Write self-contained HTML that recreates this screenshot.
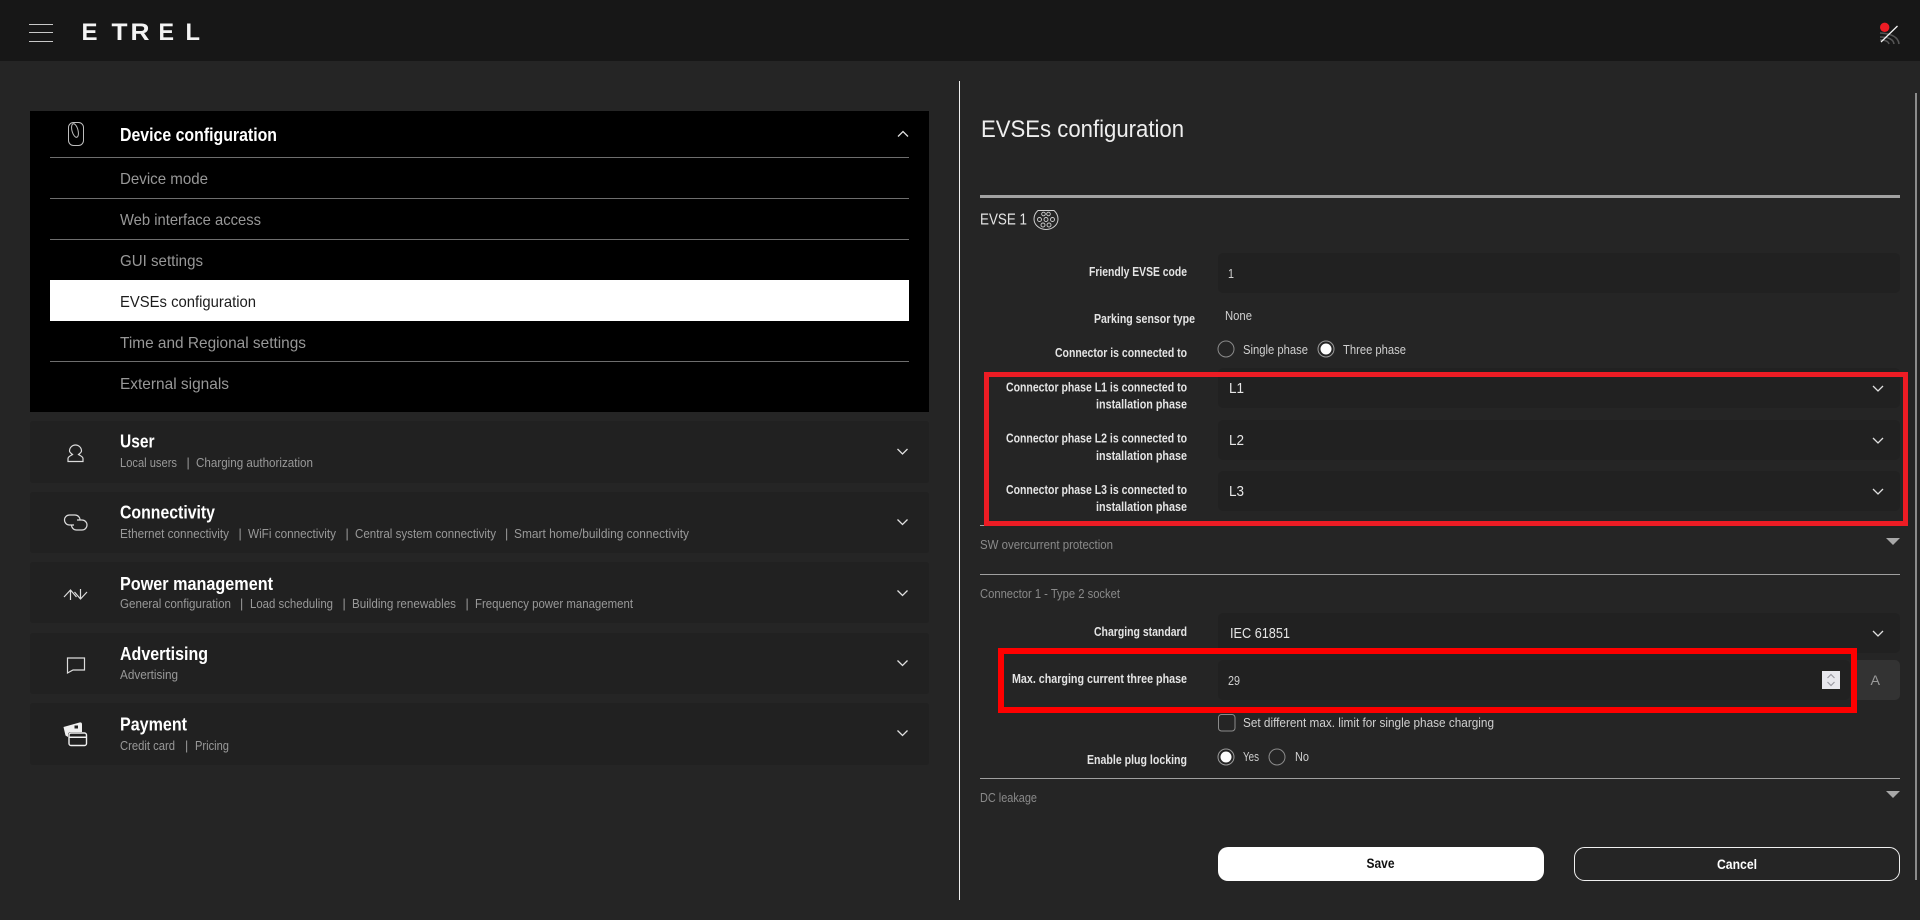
<!DOCTYPE html>
<html lang="en">
<head>
<meta charset="utf-8">
<title>EVSEs configuration</title>
<style>
html,body{margin:0;padding:0;width:1920px;height:920px;overflow:hidden;background:#252525}
svg{display:block}
text{font-family:"Liberation Sans",sans-serif;white-space:pre}
.t{font-size:18px;font-weight:700;fill:#fff}
.i{font-size:16px;fill:#989898}
.s{font-size:12.5px;fill:#999}
.l{font-size:12.5px;font-weight:700;fill:#e4e4e4}
.v{font-size:12.5px;fill:#d0d0d0}
.g{font-size:12.5px;fill:#8a8a8a}
.x{font-size:14.5px;fill:#e6e6e6}
.logo{font-size:24px;font-weight:700;fill:#f4f4f4}
.ic{fill:none;stroke:#dcdcdc;stroke-width:1.2}
.ch{fill:none;stroke:#e0e0e0;stroke-width:1.3}
</style>
</head>
<body>
<svg xmlns="http://www.w3.org/2000/svg" width="1920" height="920" viewBox="0 0 1920 920">
<rect width="1920" height="920" fill="#252525"/>

<!-- Header -->
<rect width="1920" height="61" fill="#171717"/>
<rect x="29" y="24" width="24" height="1" fill="#c8c8c8"/>
<rect x="29" y="32" width="24" height="1" fill="#c8c8c8"/>
<rect x="29" y="41" width="24" height="1" fill="#c8c8c8"/>
<text class="logo" x="81.5" y="40" textLength="16" lengthAdjust="spacingAndGlyphs">E</text>
<text class="logo" x="111.5" y="40" textLength="16" lengthAdjust="spacingAndGlyphs">T</text>
<text class="logo" x="130.5" y="40" textLength="19" lengthAdjust="spacingAndGlyphs">R</text>
<text class="logo" x="158.5" y="40" textLength="15.500" lengthAdjust="spacingAndGlyphs">E</text>
<text class="logo" x="185.5" y="40" textLength="14.500" lengthAdjust="spacingAndGlyphs">L</text>
<path d="M1880 33Q1898 34 1899 44M1880 37Q1893 37 1894 44M1880 40Q1888 40 1889 44" fill="none" stroke="#555" stroke-width="1.6"/>
<path d="M1881 42L1897.500 26" stroke="#f4f4f4" stroke-width="1.300"/>
<circle cx="1884.7" cy="27.3" r="4.700" fill="#ed1c24"/>

<!-- Left: open panel -->
<rect x="30" y="111" width="899" height="301" fill="#000"/>
<rect x="68.500" y="122.500" width="15" height="23" rx="5" fill="none" stroke="#bdbdbd" stroke-width="1"/>
<ellipse cx="75" cy="130.500" rx="3" ry="7" transform="rotate(-15 75 130.500)" fill="none" stroke="#bdbdbd" stroke-width="1"/>
<text class="t" x="120" y="141" textLength="157" lengthAdjust="spacingAndGlyphs">Device configuration</text>
<path class="ch" d="M898 136.500L903 131.500L908 136.500"/>
<rect x="50" y="157" width="859" height="1" fill="#6e6e6e"/>
<rect x="50" y="198" width="859" height="1" fill="#6e6e6e"/>
<rect x="50" y="239" width="859" height="1" fill="#6e6e6e"/>
<rect x="50" y="361" width="859" height="1" fill="#6e6e6e"/>
<rect x="50" y="280" width="859" height="41" fill="#fff"/>
<text class="i" x="120" y="184" textLength="88" lengthAdjust="spacingAndGlyphs">Device mode</text>
<text class="i" x="120" y="225" textLength="141" lengthAdjust="spacingAndGlyphs">Web interface access</text>
<text class="i" x="120" y="266" textLength="83" lengthAdjust="spacingAndGlyphs">GUI settings</text>
<text class="i" x="120" y="307" textLength="136" lengthAdjust="spacingAndGlyphs" style="fill:#1c1c1c">EVSEs configuration</text>
<text class="i" x="120" y="348" textLength="186" lengthAdjust="spacingAndGlyphs">Time and Regional settings</text>
<text class="i" x="120" y="389" textLength="109" lengthAdjust="spacingAndGlyphs">External signals</text>

<!-- Left: collapsed cards -->
<rect x="30" y="421" width="899" height="62" rx="3" fill="#212121"/>
<rect x="30" y="492" width="899" height="61" rx="3" fill="#212121"/>
<rect x="30" y="562" width="899" height="61" rx="3" fill="#212121"/>
<rect x="30" y="633" width="899" height="61" rx="3" fill="#212121"/>
<rect x="30" y="703" width="899" height="62" rx="3" fill="#212121"/>

<!-- User -->
<path class="ic" d="M68 461.500V458.500C68 456.500 71 455.500 72.500 454.500C70.500 453 69.500 451.500 69.500 451A6 6 0 0 1 81.500 451C81.500 451.500 80.500 453 78.500 454.500C80 455.500 83 456.500 83 458.500V461.500Z"/>
<text class="t" x="120" y="447.500" textLength="34.500" lengthAdjust="spacingAndGlyphs">User</text>
<text class="s" x="120" y="467" textLength="57" lengthAdjust="spacingAndGlyphs">Local users</text>
<text class="s" x="186.500" y="467">|</text>
<text class="s" x="196" y="467" textLength="117" lengthAdjust="spacingAndGlyphs">Charging authorization</text>
<path class="ch" d="M897.500 449L902.500 454L907.500 449"/>

<!-- Connectivity -->
<path class="ic" d="M74 525H69.500a5 5 0 0 1 0-10H75a5 5 0 0 1 5 5M77 520H82a5 5 0 0 1 0 10H76.500a5 5 0 0 1-5-5"/>
<text class="t" x="120" y="518.500" textLength="95" lengthAdjust="spacingAndGlyphs">Connectivity</text>
<text class="s" x="120" y="538" textLength="109" lengthAdjust="spacingAndGlyphs">Ethernet connectivity</text>
<text class="s" x="238.500" y="538">|</text>
<text class="s" x="248" y="538" textLength="88" lengthAdjust="spacingAndGlyphs">WiFi connectivity</text>
<text class="s" x="345.500" y="538">|</text>
<text class="s" x="355" y="538" textLength="141" lengthAdjust="spacingAndGlyphs">Central system connectivity</text>
<text class="s" x="505" y="538">|</text>
<text class="s" x="514" y="538" textLength="175" lengthAdjust="spacingAndGlyphs">Smart home/building connectivity</text>
<path class="ch" d="M897.500 519.500L902.500 524.500L907.500 519.500"/>

<!-- Power management -->
<path class="ic" d="M64 597L70.500 590L76.500 597M70.500 590V600M74.500 592L80.500 599L87 592M80.500 589V599"/>
<text class="t" x="120" y="590" textLength="153" lengthAdjust="spacingAndGlyphs">Power management</text>
<text class="s" x="120" y="608" textLength="111" lengthAdjust="spacingAndGlyphs">General configuration</text>
<text class="s" x="240" y="608">|</text>
<text class="s" x="250" y="608" textLength="83" lengthAdjust="spacingAndGlyphs">Load scheduling</text>
<text class="s" x="342.500" y="608">|</text>
<text class="s" x="352" y="608" textLength="104" lengthAdjust="spacingAndGlyphs">Building renewables</text>
<text class="s" x="465.500" y="608">|</text>
<text class="s" x="475" y="608" textLength="158" lengthAdjust="spacingAndGlyphs">Frequency power management</text>
<path class="ch" d="M897.500 590.500L902.500 595.500L907.500 590.500"/>

<!-- Advertising -->
<path class="ic" d="M67.500 658H84.500V670H73L67.500 673Z"/>
<text class="t" x="120" y="660" textLength="88" lengthAdjust="spacingAndGlyphs">Advertising</text>
<text class="s" x="120" y="679" textLength="58" lengthAdjust="spacingAndGlyphs">Advertising</text>
<path class="ch" d="M897.500 660.500L902.500 665.500L907.500 660.500"/>

<!-- Payment -->
<path d="M63.500 727L79.500 722.500q2.500-.5 2.500 2V732H71q-3 0-3 3v2L65.500 735.500Z" fill="#f0f0f0"/>
<rect x="74.500" y="725.500" width="3.500" height="3" fill="#212121"/>
<rect x="69" y="733" width="17.500" height="12.500" rx="2" fill="none" stroke="#f0f0f0" stroke-width="1.400"/>
<rect x="69" y="736.500" width="17.500" height="1.500" fill="#f0f0f0"/>
<text class="t" x="120" y="730.500" textLength="67" lengthAdjust="spacingAndGlyphs">Payment</text>
<text class="s" x="120" y="750" textLength="55" lengthAdjust="spacingAndGlyphs">Credit card</text>
<text class="s" x="185" y="750">|</text>
<text class="s" x="195" y="750" textLength="34" lengthAdjust="spacingAndGlyphs">Pricing</text>
<path class="ch" d="M897.500 730.500L902.500 735.500L907.500 730.500"/>

<!-- Dividers -->
<rect x="959" y="81" width="1" height="819" fill="#f0f0f0"/>
<rect x="1915" y="93" width="2" height="787" fill="#8c8c8c"/>

<!-- Right: heading -->
<text x="981" y="137" textLength="203" lengthAdjust="spacingAndGlyphs" font-size="24" fill="#eeeeee">EVSEs configuration</text>
<rect x="980" y="195" width="920" height="3" fill="#a2a2a2"/>
<text x="980" y="224.500" textLength="47" lengthAdjust="spacingAndGlyphs" font-size="16" fill="#e4e4e4">EVSE 1</text>
<path d="M1038 210.500H1054Q1058 214 1058 219A12 10.500 0 0 1 1034 219Q1034 214 1038 210.500Z" fill="none" stroke="#cfcfcf" stroke-width="1"/>
<g fill="none" stroke="#cfcfcf" stroke-width=".9">
<circle cx="1043.500" cy="214" r="1.800"/><circle cx="1048.500" cy="214" r="1.800"/>
<circle cx="1039.500" cy="219.500" r="2"/><circle cx="1046" cy="219.500" r="2"/><circle cx="1052.500" cy="219.500" r="2"/>
<circle cx="1043" cy="225" r="2"/><circle cx="1049" cy="225" r="2"/>
</g>

<!-- Inputs -->
<g fill="#212121">
<rect x="1218" y="253" width="682" height="40" rx="5"/>
<rect x="1218" y="368" width="682" height="40" rx="5"/>
<rect x="1218" y="420" width="682" height="40" rx="5"/>
<rect x="1218" y="471" width="682" height="40" rx="5"/>
<rect x="1218" y="613" width="682" height="40" rx="5"/>
<rect x="1218" y="660" width="632" height="40" rx="5"/>
</g>

<text class="l" x="1089" y="276" textLength="98" lengthAdjust="spacingAndGlyphs">Friendly EVSE code</text>
<text class="v" x="1228" y="278" textLength="6" lengthAdjust="spacingAndGlyphs">1</text>

<text class="l" x="1094" y="323" textLength="101" lengthAdjust="spacingAndGlyphs">Parking sensor type</text>
<text class="v" x="1225" y="320" textLength="27" lengthAdjust="spacingAndGlyphs">None</text>

<text class="l" x="1055" y="357" textLength="132" lengthAdjust="spacingAndGlyphs">Connector is connected to</text>
<circle cx="1226" cy="349" r="8" fill="none" stroke="#8a8a8a" stroke-width="1"/>
<text class="v" x="1243" y="354" textLength="65" lengthAdjust="spacingAndGlyphs">Single phase</text>
<circle cx="1326" cy="349" r="8" fill="none" stroke="#9a9a9a" stroke-width="1"/>
<circle cx="1326" cy="349" r="5.500" fill="#fff"/>
<text class="v" x="1343" y="354" textLength="63" lengthAdjust="spacingAndGlyphs">Three phase</text>

<text class="l" x="1006" y="391.500" textLength="181" lengthAdjust="spacingAndGlyphs">Connector phase L1 is connected to</text>
<text class="l" x="1096" y="408.500" textLength="91" lengthAdjust="spacingAndGlyphs">installation phase</text>
<text class="x" x="1229" y="393" textLength="15" lengthAdjust="spacingAndGlyphs">L1</text>
<path class="ch" d="M1873 386L1878 391L1883 386"/>

<text class="l" x="1006" y="442.500" textLength="181" lengthAdjust="spacingAndGlyphs">Connector phase L2 is connected to</text>
<text class="l" x="1096" y="460" textLength="91" lengthAdjust="spacingAndGlyphs">installation phase</text>
<text class="x" x="1229" y="445" textLength="15" lengthAdjust="spacingAndGlyphs">L2</text>
<path class="ch" d="M1873 438L1878 443L1883 438"/>

<text class="l" x="1006" y="494" textLength="181" lengthAdjust="spacingAndGlyphs">Connector phase L3 is connected to</text>
<text class="l" x="1096" y="511" textLength="91" lengthAdjust="spacingAndGlyphs">installation phase</text>
<text class="x" x="1229" y="496" textLength="15" lengthAdjust="spacingAndGlyphs">L3</text>
<path class="ch" d="M1873 489L1878 494L1883 489"/>

<rect x="980" y="525" width="920" height="1" fill="#a0a0a0"/>
<rect x="986.500" y="374.500" width="919" height="149" fill="none" stroke="#ed1c24" stroke-width="5"/>

<text class="g" x="980" y="549" textLength="133" lengthAdjust="spacingAndGlyphs">SW overcurrent protection</text>
<path d="M1886 538H1900L1893 545Z" fill="#a8a8a8"/>
<rect x="980" y="574" width="920" height="1" fill="#a0a0a0"/>
<text class="g" x="980" y="598" textLength="140" lengthAdjust="spacingAndGlyphs">Connector 1 - Type 2 socket</text>

<text class="l" x="1094" y="636" textLength="93" lengthAdjust="spacingAndGlyphs">Charging standard</text>
<text class="x" x="1230" y="638" textLength="60" lengthAdjust="spacingAndGlyphs">IEC 61851</text>
<path class="ch" d="M1873 631L1878 636L1883 631"/>

<text class="l" x="1012" y="683" textLength="175" lengthAdjust="spacingAndGlyphs">Max. charging current three phase</text>
<text class="v" x="1228" y="685" textLength="12" lengthAdjust="spacingAndGlyphs">29</text>
<rect x="1822" y="671" width="18" height="18" fill="#e8e8ee"/>
<path d="M1827.500 678L1831 674.500L1834.500 678M1827.500 682L1831 685.500L1834.500 682" fill="none" stroke="#9c9ca4" stroke-width="1.200"/>
<path d="M1857 660H1895a5 5 0 0 1 5 5V695a5 5 0 0 1-5 5H1857Z" fill="#333"/>
<text x="1870.500" y="685" textLength="9.500" lengthAdjust="spacingAndGlyphs" font-size="14" fill="#9a9a9a">A</text>
<rect x="1001" y="651" width="853" height="59" fill="none" stroke="#ff0000" stroke-width="6"/>

<rect x="1218.500" y="714.500" width="16.500" height="16.500" rx="3" fill="none" stroke="#8a8a8a" stroke-width="1"/>
<text class="v" x="1243" y="727" textLength="251" lengthAdjust="spacingAndGlyphs">Set different max. limit for single phase charging</text>

<text class="l" x="1087" y="764" textLength="100" lengthAdjust="spacingAndGlyphs">Enable plug locking</text>
<circle cx="1226" cy="757" r="8" fill="none" stroke="#9a9a9a" stroke-width="1"/>
<circle cx="1226" cy="757" r="5.500" fill="#fff"/>
<text class="v" x="1243" y="761" textLength="16" lengthAdjust="spacingAndGlyphs">Yes</text>
<circle cx="1277" cy="757" r="8" fill="none" stroke="#8a8a8a" stroke-width="1"/>
<text class="v" x="1295" y="761" textLength="14" lengthAdjust="spacingAndGlyphs">No</text>

<rect x="980" y="778" width="920" height="1" fill="#a0a0a0"/>
<text class="g" x="980" y="802" textLength="57" lengthAdjust="spacingAndGlyphs">DC leakage</text>
<path d="M1886 791H1900L1893 798Z" fill="#a8a8a8"/>

<!-- Buttons -->
<rect x="1218" y="847" width="326" height="34" rx="10" fill="#fff"/>
<text x="1366.500" y="868" textLength="28" lengthAdjust="spacingAndGlyphs" font-size="13.500" font-weight="700" fill="#111">Save</text>
<rect x="1574.500" y="847.500" width="325" height="33" rx="10" fill="none" stroke="#f0f0f0" stroke-width="1"/>
<text x="1717" y="869" textLength="40" lengthAdjust="spacingAndGlyphs" font-size="13.500" font-weight="700" fill="#fff">Cancel</text>
</svg>
</body>
</html>
